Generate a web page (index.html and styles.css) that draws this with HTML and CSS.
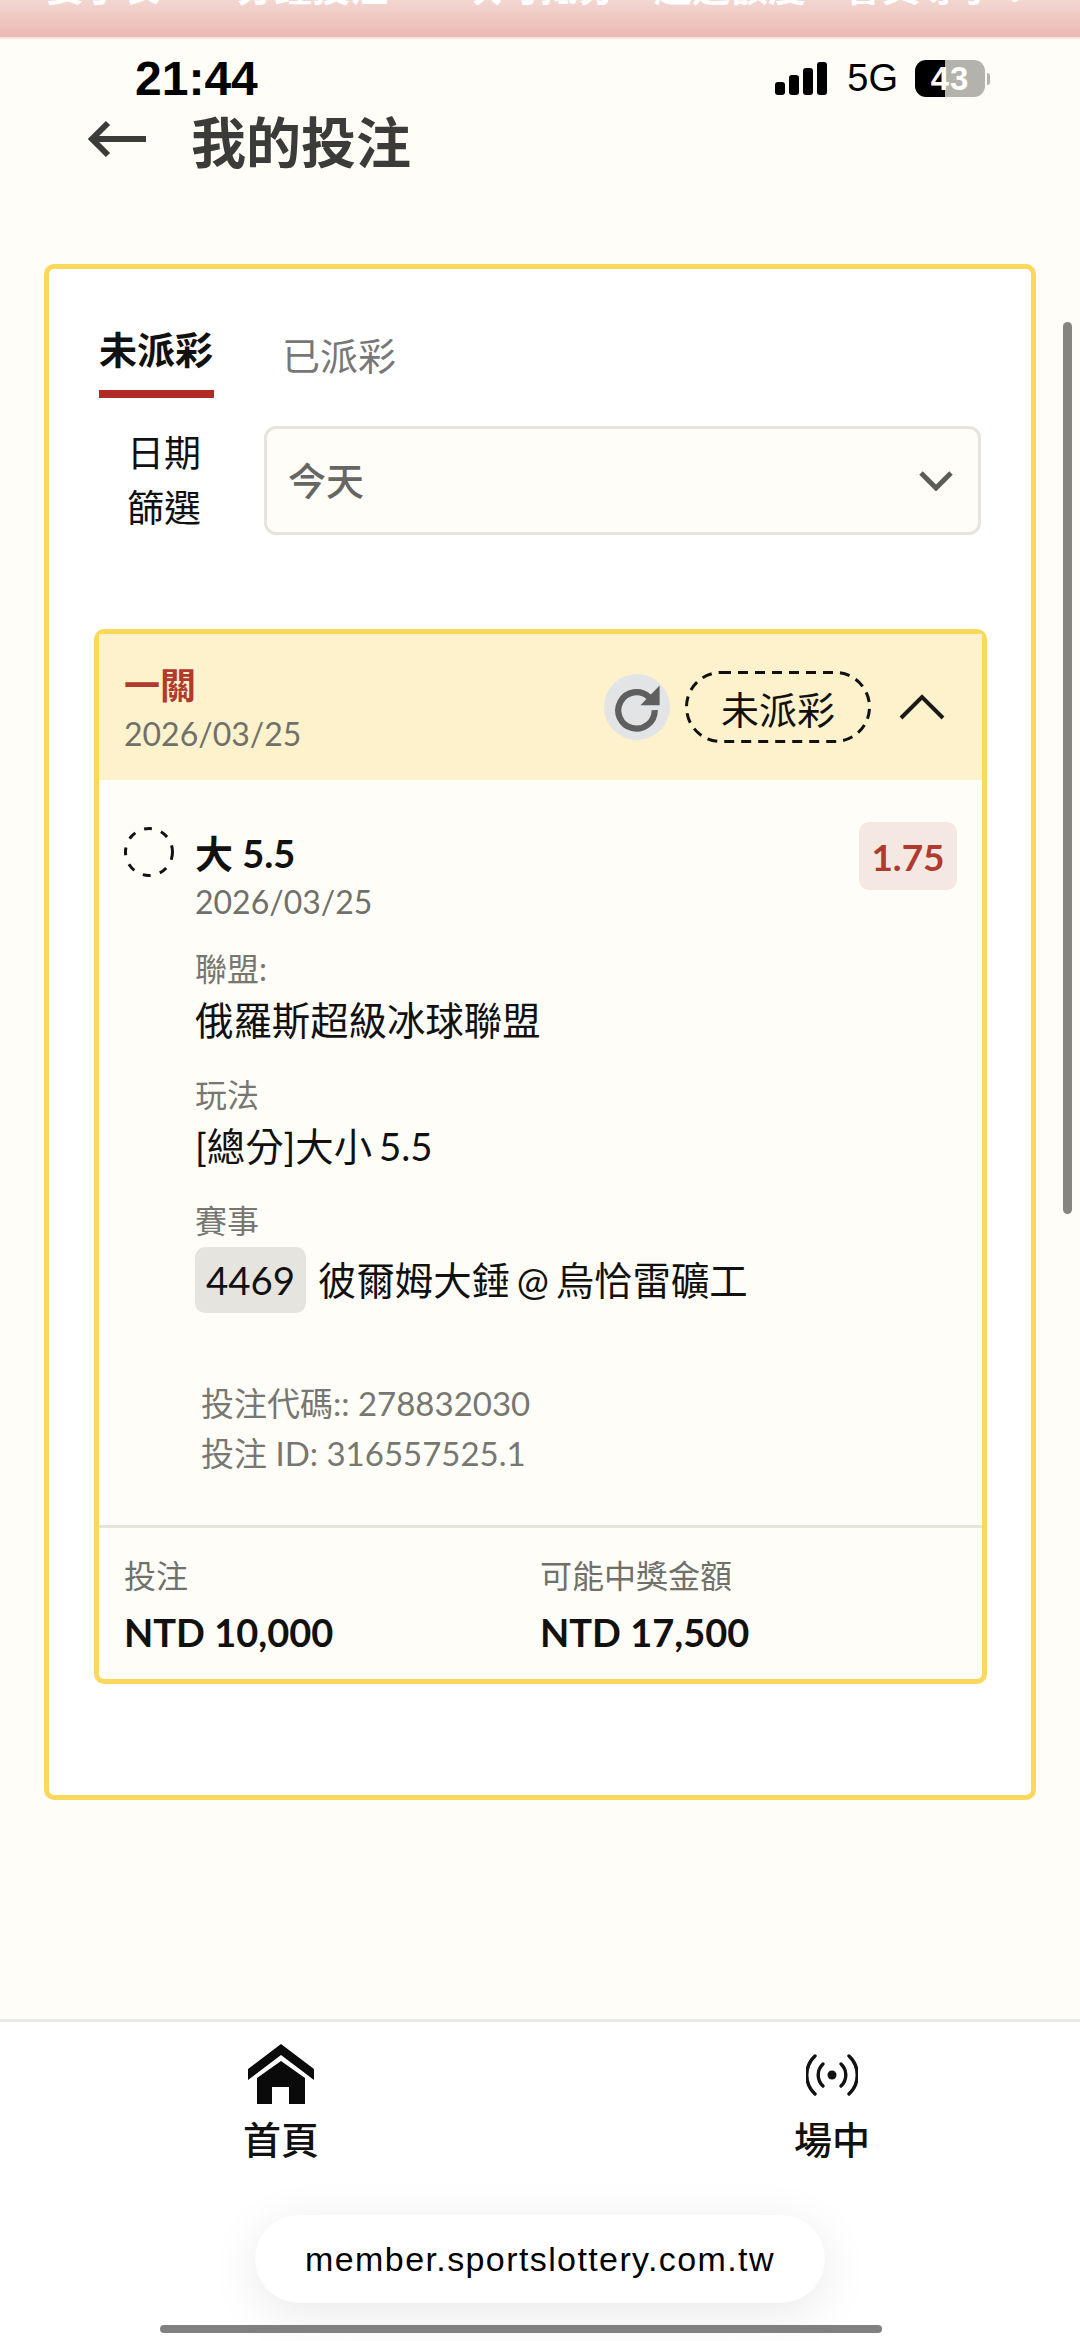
FILE: index.html
```html
<!DOCTYPE html>
<html lang="zh-Hant">
<head>
    <meta charset="UTF-8">
    <meta name="viewport" content="width=device-width, initial-scale=1.0">
    <title>我的投注</title>
    <link rel="stylesheet" href="styles.css">
</head>
<body>

    <div class="banner"><span class="banner-text">要手表　一分鐘投注　一次可抵分　超過額度　會員專享！</span></div>

    <div class="statusbar">
        <span class="time">21:44</span>
        <div class="status-right">
            <div class="signal"><i class="s1"></i><i class="s2"></i><i class="s3"></i><i class="s4"></i></div>
            <span class="net">5G</span>
            <div class="battery"><span class="battery-level">43</span></div>
            <div class="battery-cap"></div>
        </div>
    </div>

    <header class="topbar">
        <svg class="back" width="60" height="38" viewBox="0 0 60 38"><path d="M58 19H5M20 3L4 19l16 16" fill="none" stroke="#3b3b39" stroke-width="6"/></svg>
        <h1>我的投注</h1>
    </header>

    <main class="panel">
        <div class="tabs">
            <div class="tab active">未派彩</div>
            <div class="tab">已派彩</div>
        </div>

        <div class="filter">
            <label class="filter-label">日期<br>篩選</label>
            <div class="select">
                <span class="select-text">今天</span>
                <svg width="36" height="22" viewBox="0 0 36 22"><path d="M3 4l15 15L33 4" fill="none" stroke="#5c5c58" stroke-width="5"/></svg>
            </div>
        </div>

        <section class="bet">
            <div class="bet-head">
                <div class="bet-title">
                    <div class="bet-type">一關</div>
                    <div class="muted">2026/03/25</div>
                </div>
                <div class="refresh">
                    <svg width="50" height="50" viewBox="0 0 48 48"><path d="M41 27a17.5 17.5 0 1 1-5.5-12.5" fill="none" stroke="#5f5f5f" stroke-width="6"/><path d="M45.7 3.3v19H27.3z" fill="#5f5f5f"/></svg>
                </div>
                <div class="status-pill">
                    <svg class="pill-dash" width="186" height="72" viewBox="0 0 186 72"><rect x="1.5" y="1.5" width="183" height="69" rx="34.5" fill="none" stroke="#111" stroke-width="3" stroke-dasharray="10 7"/></svg>
                    未派彩
                </div>
                <svg class="collapse" width="46" height="26" viewBox="0 0 46 26"><path d="M2 24L23 3l21 21" fill="none" stroke="#1a1a18" stroke-width="4"/></svg>
            </div>

            <div class="bet-body">
                <div class="selection">
                    <svg class="dash-circle" width="50" height="50" viewBox="0 0 50 50"><circle cx="25" cy="25" r="23.5" fill="none" stroke="#111" stroke-width="3" stroke-dasharray="8 9.5"/></svg>
                    <div class="selection-info">
                        <div class="selection-name">大 5.5</div>
                        <div class="muted">2026/03/25</div>
                    </div>
                    <div class="odds">1.75</div>
                </div>

                <div class="detail">
                    <div class="detail-label">聯盟:</div>
                    <div class="detail-value">俄羅斯超級冰球聯盟</div>
                </div>
                <div class="detail">
                    <div class="detail-label">玩法</div>
                    <div class="detail-value">[總分]大小 5.5</div>
                </div>
                <div class="detail">
                    <div class="detail-label">賽事</div>
                    <div class="detail-value match"><span class="chip">4469</span>彼爾姆大錘 @ 烏恰雷礦工</div>
                </div>

                <div class="codes">
                    <div>投注代碼:: 278832030</div>
                    <div>投注 ID: 316557525.1</div>
                </div>
            </div>

            <div class="bet-foot">
                <div class="foot-col">
                    <div class="muted">投注</div>
                    <div class="amount">NTD 10,000</div>
                </div>
                <div class="foot-col">
                    <div class="muted">可能中獎金額</div>
                    <div class="amount">NTD 17,500</div>
                </div>
            </div>
        </section>
    </main>

    <div class="scrollbar"></div>

    <nav class="bottomnav">
        <div class="nav-item home">
            <svg width="66" height="60" viewBox="0 0 66 60"><path d="M33 0l33 25v11L33 11 0 36V25z" fill="#0a0a0a"/><path d="M33 17l24 17v26H41V43H24v17H9V34z" fill="#0a0a0a"/></svg>
            <span>首頁</span>
        </div>
        <div class="nav-item live">
            <svg width="52" height="42" viewBox="0 0 52 42"><circle cx="26" cy="21" r="4.5" fill="#111"/><g fill="none" stroke="#111" stroke-width="3.4" stroke-linecap="round"><path d="M17 10a15 15 0 0 0 0 22M35 10a15 15 0 0 1 0 22"/><path d="M9 2a26 26 0 0 0 0 38M43 2a26 26 0 0 1 0 38"/></g></svg>
            <span>場中</span>
        </div>
    </nav>

    <div class="urlbar">member.sportslottery.com.tw</div>
    <div class="homebar"></div>

</body>
</html>
```

FILE: styles.css
```css
* {
    margin: 0;
    padding: 0;
    box-sizing: border-box;
}

html, body {
    height: 2341px;
    overflow: hidden;
}

body {
    font-family: Lato, 'Noto Sans CJK TC', sans-serif;
    background-color: #fffdf7;
    color: #111;
    display: flex;
    flex-direction: column;
    position: relative;
}

/* top of the page, scrolled under the status bar */
.banner {
    height: 39px;
    flex-shrink: 0;
    background: linear-gradient(#f3d7d2, #ebb8b3);
    border-bottom: 2px solid #f8e4e0;
    overflow: hidden;
    text-align: center;
    white-space: nowrap;
}

.banner-text {
    display: block;
    margin-top: -36px;
    font-size: 38px;
    font-weight: 700;
    line-height: 44px;
    color: #fff;
}

.statusbar {
    height: 63px;
    flex-shrink: 0;
    display: flex;
    justify-content: space-between;
    align-items: center;
    padding: 16px 90px 0 135px;
    font-family: 'Liberation Sans', sans-serif;
}

.time {
    font-size: 48px;
    font-weight: 700;
    color: #000;
}

.status-right {
    display: flex;
    align-items: center;
}

.signal {
    display: flex;
    align-items: flex-end;
    gap: 4px;
    height: 33px;
    margin-right: 20px;
}

.signal i {
    display: block;
    width: 10px;
    background-color: #000;
    border-radius: 3px;
}

.s1 { height: 13px; }
.s2 { height: 20px; }
.s3 { height: 27px; }
.s4 { height: 33px; }

.net {
    font-size: 38px;
    color: #000;
    margin-right: 17px;
}

.battery {
    width: 70px;
    height: 37px;
    border-radius: 11px;
    background: linear-gradient(90deg, #000 43%, #b3b2ac 43%);
    display: flex;
    align-items: center;
    justify-content: center;
}

.battery-level {
    font-size: 33px;
    font-weight: 700;
    color: #fffdf7;
    letter-spacing: 1px;
}

.battery-cap {
    width: 3px;
    height: 12px;
    margin-left: 2px;
    background-color: #b3b2ac;
    border-radius: 0 3px 3px 0;
}

.topbar {
    height: 68px;
    flex-shrink: 0;
    display: flex;
    align-items: center;
    padding: 6px 0 0 88px;
    gap: 43px;
}

.topbar h1 {
    font-size: 55px;
    font-weight: 700;
    color: #3b3b39;
}

.panel {
    margin: 94px 44px 0 44px;
    width: 992px;
    height: 1536px;
    flex-shrink: 0;
    padding: 55px 46px 0 50px;
    background-color: #fff;
    border: 5px solid #fbd75b;
    border-radius: 10px;
}

.tabs {
    display: flex;
    gap: 68px;
    align-items: flex-start;
    height: 74px;
}

.tab {
    font-size: 38px;
    line-height: 50px;
    color: #777;
    padding-top: 6px;
}

.tab.active {
    width: 115px;
    font-weight: 700;
    color: #111;
    padding-top: 0;
    padding-bottom: 16px;
    border-bottom: 8px solid #b22a24;
    white-space: nowrap;
}

.filter {
    display: flex;
    align-items: center;
    margin-top: 27px;
}

.filter-label {
    width: 165px;
    padding-left: 28px;
    font-size: 37px;
    line-height: 55px;
}

.select {
    width: 717px;
    height: 109px;
    display: flex;
    align-items: center;
    justify-content: space-between;
    padding: 0 24px 0 21px;
    border: 3px solid #e7e4dc;
    border-radius: 12px;
    background-color: #fffdf7;
    font-size: 38px;
    font-weight: 500;
    color: #666662;
}

.select-text {
    padding-bottom: 4px;
}

.bet {
    margin: 94px 0 0 -5px;
    width: 893px;
    height: 1055px;
    background-color: #fffdf7;
    border: 5px solid #fbd75b;
    border-radius: 10px;
    display: flex;
    flex-direction: column;
}

.bet-head {
    height: 146px;
    display: flex;
    align-items: center;
    padding: 0 37px 0 25px;
    background-color: #fdf2cb;
}

.bet-title {
    flex: 1;
}

.bet-type {
    font-size: 36px;
    line-height: 54px;
    font-weight: 700;
    color: #b03a2e;
}

.muted {
    font-size: 32px;
    line-height: 44px;
    color: #70706b;
}

.refresh {
    width: 66px;
    height: 66px;
    border-radius: 50%;
    background-color: #e3e4e6;
    display: flex;
    align-items: center;
    justify-content: center;
}

.status-pill {
    position: relative;
    width: 186px;
    height: 72px;
    margin: 0 28px 0 15px;
    display: flex;
    align-items: center;
    justify-content: center;
    font-size: 38px;
    color: #111;
}

.pill-dash {
    position: absolute;
    left: 0;
    top: 0;
}

.bet-body {
    flex: 1;
    padding: 47px 25px 0 25px;
}

.selection {
    display: flex;
    align-items: flex-start;
}

.dash-circle {
    margin-right: 21px;
    flex-shrink: 0;
}

.selection-info {
    flex: 1;
}

.selection-name {
    font-size: 38px;
    line-height: 53px;
    font-weight: 700;
    color: #111;
}

.odds {
    width: 98px;
    height: 68px;
    margin-top: -5px;
    border-radius: 10px;
    background-color: #f5e8e2;
    color: #b03a2e;
    font-size: 37px;
    font-weight: 700;
    display: flex;
    align-items: center;
    justify-content: center;
}

.detail {
    padding-left: 71px;
    margin-top: 24px;
}

.selection + .detail {
    margin-top: 26px;
}

.detail-label {
    font-size: 32px;
    line-height: 38px;
    color: #777772;
}

.detail-value {
    font-size: 38.4px;
    line-height: 64px;
    word-spacing: -3px;
    color: #111;
}

.match {
    display: flex;
    align-items: center;
    line-height: 66px;
    margin-top: 7px;
}

.chip {
    width: 111px;
    height: 66px;
    margin-right: 12px;
    background-color: #e6e4df;
    border-radius: 10px;
    text-align: center;
}

.codes {
    padding-left: 77px;
    margin-top: 65px;
    font-size: 33px;
    line-height: 50px;
    color: #777772;
}

.bet-foot {
    height: 154px;
    flex-shrink: 0;
    display: flex;
    padding: 26px 25px 0 25px;
    border-top: 3px solid #e7e4dc;
}

.foot-col {
    width: 416px;
}

.amount {
    margin-top: 6px;
    font-size: 38px;
    line-height: 56px;
    font-weight: 700;
    color: #111;
}

/* page scrollbar sits over the margin */
.scrollbar {
    position: absolute;
    left: 1063px;
    top: 322px;
    width: 9px;
    height: 892px;
    background-color: #86857f;
    border-radius: 5px;
}

.bottomnav {
    margin-top: auto;
    height: 322px;
    flex-shrink: 0;
    display: flex;
    background-color: #fff;
    border-top: 3px solid #e8e8e8;
}

.nav-item {
    width: 200px;
    display: flex;
    flex-direction: column;
    align-items: center;
    font-size: 38px;
    font-weight: 500;
    color: #111;
}

.nav-item span {
    line-height: 48px;
    white-space: nowrap;
}

.home {
    margin-left: 181px;
    padding-top: 22px;
    gap: 11px;
}

.live {
    margin-left: 351px;
    padding-top: 32px;
    gap: 19px;
}

/* browser chrome over the page */
.urlbar {
    position: absolute;
    left: 255px;
    top: 2215px;
    width: 570px;
    height: 88px;
    border-radius: 44px;
    background-color: #fff;
    box-shadow: 0 10px 50px rgba(0,0,0,0.09);
    font-family: 'Liberation Sans', sans-serif;
    font-size: 34px;
    letter-spacing: 1.4px;
    color: #000;
    display: flex;
    align-items: center;
    justify-content: center;
}

.homebar {
    position: absolute;
    left: 160px;
    top: 2325px;
    width: 722px;
    height: 8px;
    border-radius: 4px;
    background-color: #808080;
}
```
